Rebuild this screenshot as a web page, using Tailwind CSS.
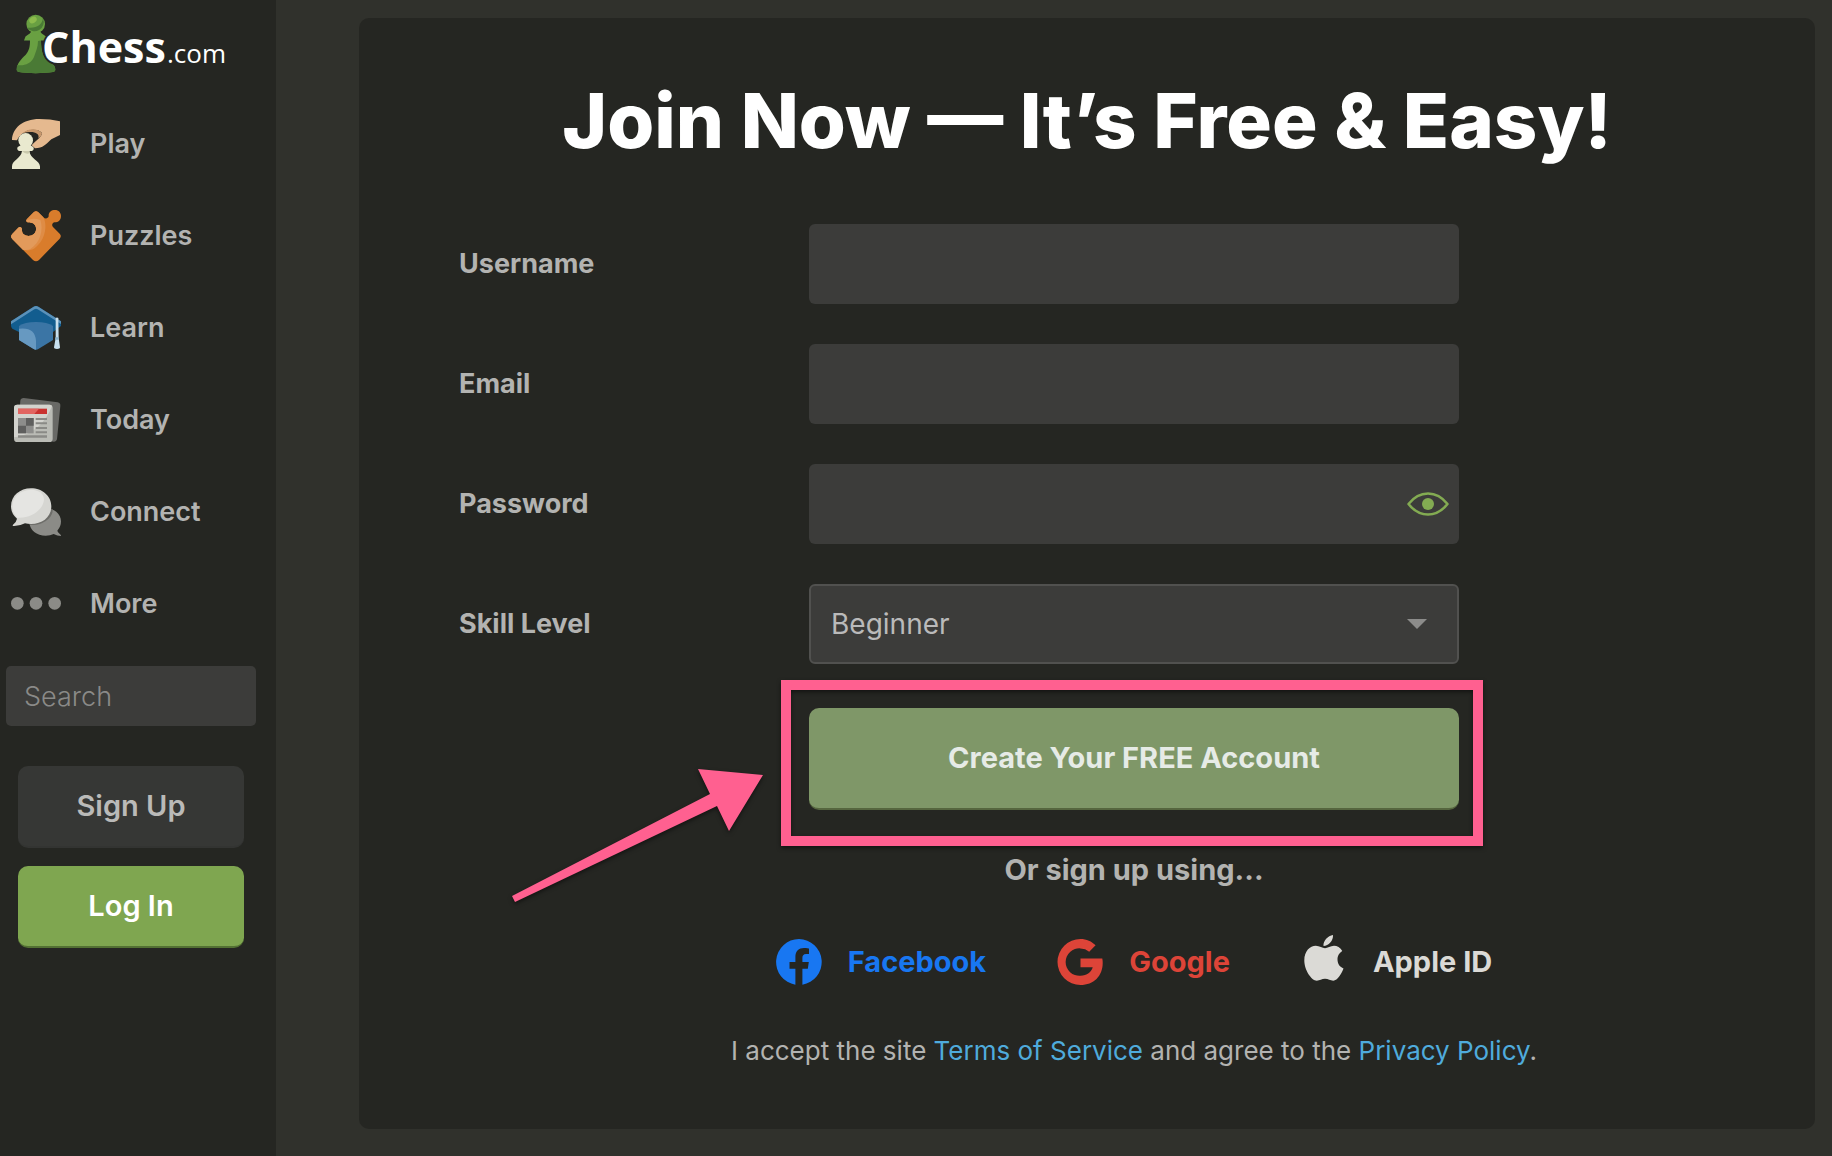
<!DOCTYPE html>
<html lang="en">
<head>
    <meta charset="UTF-8">
    <meta name="viewport" content="width=device-width, initial-scale=1.0">
    <title>Join Now - Chess.com</title>
    <script src="https://cdn.jsdelivr.net/npm/@tailwindcss/browser@4"></script>
</head>
<body class="flex min-h-screen bg-[#30312c] font-['Inter',sans-serif] text-[#b3b3b1]">

    <!-- Sidebar -->
    <aside class="w-[276px] shrink-0 bg-[#252622]">
        <a href="#" class="block h-[98px] pt-3.5 pl-4" aria-label="Chess.com">
            <svg class="h-[60px] w-[220px]" viewBox="0 0 220 60">
                <path fill="#69a042" d="M8 26.500L9.500 22.500Q15 19 15.500 17H24Q24.500 19 30 22.500L31 26.500H25C25 37 27 44 32 47C37 49.500 39.300 52 39.300 56Q39.300 57.500 37 58C27 59.500 12 59.500 3 58Q.7 57.500.7 56C.7 49 6 44.500 9.500 41C13 37 14 33 14 26.500Z"/>
                <path fill="#4a7a35" d="M25 26.500C25 37 27 44 32 47C37 49.500 39.300 52 39.300 56Q39.300 57.500 37 58C27 59.500 12 59.500 3 58Q.7 57.500.7 56L1 51C8 52 15 50 18 43C20 37 22 33 22 27Z"/>
                <circle cx="19.700" cy="10" r="9.300" fill="#69a042"/>
                <path fill="#4a7a35" d="M27 4.300A9.300 9.300 0 0 1 11 13.500C20 15 26 11 27 4.300Z"/>
                <ellipse cx="17" cy="6" rx="4" ry="3" fill="#8cbb4c" transform="rotate(-35 17 6)"/>
                <g fill="#fff" font-family="Open Sans, sans-serif">
                    <text x="26" y="49" font-size="43" font-weight="700" stroke="#252622" stroke-width="4" stroke-linejoin="round" paint-order="stroke">Chess</text>
                    <text x="151" y="49" font-size="26">.com</text>
                </g>
            </svg>
        </a>

        <nav class="text-[27px] font-semibold">
            <a href="#" class="flex h-[92px] items-center gap-[29px] pl-[11px]">
                <svg class="size-[50px]" viewBox="0 0 150 150">
                    <path fill="#e5b98f" d="M3 63C4 28 35 0 85 0Q118 0 147 7V48L121 61C105 75 96 88 72 88L62 79C72 66 92 56 93 42C86 31 55 28 40 40C29 47 22 55 18 64Z"/>
                    <path fill="#252622" d="M48 42C62 35 87 38 84 48C81 56 74 60 70 64C64 60 62 50 48 42Z"/>
                    <path fill="#c8986d" d="M35 43C50 27 80 26 93 42C92 50 88 54 82 58C88 40 62 34 35 43Z"/>
                    <path fill="#e9e9cf" d="M3 150V142C4 122 30 120 33 96H24Q16 92 20 84L31 78H57L67 84Q71 92 63 96H55C58 120 86 124 87 142V150Z"/>
                    <circle cx="44" cy="64" r="22" fill="#e9e9cf"/>
                    <path fill="#c9c9ac" d="M33 96H55L56 102Q46 108 33 97Z"/>
                </svg>
                Play
            </a>
            <a href="#" class="flex h-[92px] items-center gap-[29px] pl-[11px]">
                <svg class="size-[50px] overflow-visible" viewBox="0 3 150 150">
                    <path fill="#d97c2b" d="M4 72L22 53Q27 49 31 53C35 58 31 66 37 72C45 80 60 80 69 72C78 63 77 49 69 42C62 35 54 40 48 36Q43 32 48 27L68 7Q75 0 82 7L97 22C103 28 111 26 113 19C112 6 121 0 132 0C143 0 150 8 150 18C150 30 142 37 131 37C124 38 121 46 126 51L146 71Q153 78 146 86L84 150Q75 158 66 150L4 87Q-3 79 4 72Z"/>
                    <path fill="#df8c45" d="M4 72L22 53Q27 49 31 53C35 58 31 66 37 72C45 80 60 80 69 72C78 63 77 49 69 42C62 35 54 40 48 36Q43 32 48 27L68 7Q75 0 82 7L97 22C112 50 100 98 66 118Q52 124 36 119L4 87Q-3 79 4 72Z"/>
                    <path fill="#e29a5b" d="M4 72L22 53Q27 49 31 53C35 58 31 66 37 72C45 80 60 80 69 72C78 63 77 49 69 42C62 35 54 40 48 36Q46 34 46 31Q66 22 88 30C98 60 88 98 58 117Q48 121 36 119L4 87Q-3 79 4 72Z"/>
                </svg>
                Puzzles
            </a>
            <a href="#" class="flex h-[92px] items-center gap-[29px] pl-[11px]">
                <svg class="size-[50px]" viewBox="0 -9 150 150">
                    <path fill="#125d8f" d="M0 46L68 2Q75-2 82 2L150 46V60L126 78H24L4 68Q0 66 0 58Z"/>
                    <path fill="#5b91b9" d="M0 46L68 2Q75-2 82 2L150 46V54L80 10Q75 7 70 10L0 55Z"/>
                    <path fill="#3b75a5" d="M24 60Q40 48 75 48Q110 48 126 60V102L82 129Q75 133 68 129L24 102Z"/>
                    <path fill="#6799c1" d="M24 68Q72 62 75 104V131Q71 131 68 129L24 102Z"/>
                    <path fill="#c8e0ee" d="M134 36Q138 33 142 36L143 96L147 124Q147 129 138 129Q129 129 129 124L134 96Z"/>
                    <path fill="#8db4cd" d="M133 94H143V101H132Z"/>
                </svg>
                Learn
            </a>
            <a href="#" class="flex h-[92px] items-center gap-[29px] pl-[11px]">
                <svg class="size-[50px]" viewBox="0 -9 150 150">
                    <path fill="#696966" d="M28 8Q29 0 38 0L140 13Q149 15 148 24L138 124Q136 132 128 131L20 118Z"/>
                    <rect x="9" y="20" width="116" height="112" rx="10" fill="#babbb5"/>
                    <path fill="#d3d3ce" d="M19 20H115Q120 20 123 24C105 70 70 110 9 118V30Q9 20 19 20Z"/>
                    <path fill="#c93230" d="M21 32H108V48H21Z"/>
                    <path fill="#e26561" d="M21 32H84L70 48H21Z"/>
                    <path fill="#8d8d8b" d="M21 60H68V106H21Z"/>
                    <path fill="#5f5f5e" d="M45 60H68V83H45ZM21 83H45V106H21Z"/>
                    <path fill="#8a8a86" d="M74 60H108V66H74ZM74 73H108V79H74ZM74 87H108V93H74ZM74 100H108V106H74ZM21 112H108V119H21Z"/>
                </svg>
                Today
            </a>
            <a href="#" class="flex h-[92px] items-center gap-[29px] pl-[11px]">
                <svg class="size-[50px]" viewBox="0 -4 150 150">
                    <path fill="#8b8b87" d="M150 99C150 76 128 60 103 60C76 60 55 76 55 100C55 126 78 142 104 142Q118 142 128 137Q139 143 150 143Q151 140 144 135Q140 131 139 127Q150 115 150 99Z"/>
                    <path fill="#6d6d69" d="M125 63C127 88 95 113 57 110Q54 105 55 97C58 76 78 60 103 60Q115 60 125 63Z"/>
                    <path fill="#d6d6d2" d="M0 54C0 22 27 0 60 0C94 0 121 23 121 54C121 86 94 107 60 107Q50 107 42 105Q25 114 6 113Q3 111 9 106Q16 100 18 91Q0 76 0 54Z"/>
                    <path fill="#e5e5e2" d="M4 54C4 25 28 5 60 4Q98 6 99 34C96 66 58 91 19 88Q4 74 4 54Z"/>
                </svg>
                Connect
            </a>
            <a href="#" class="flex h-[92px] items-center gap-[29px] pl-[11px]">
                <svg class="size-[50px]" viewBox="0 0 150 150" fill="#8b8b87">
                    <circle cx="19" cy="73" r="19"/>
                    <circle cx="75" cy="73" r="19"/>
                    <circle cx="131" cy="73" r="19"/>
                </svg>
                More
            </a>
        </nav>

        <div class="mt-4 mr-5 ml-1.5">
            <input type="search" aria-label="Search" placeholder="Search" class="block h-[60px] w-full rounded-[5px] bg-[#3c3c3a] px-[18px] text-[27px] font-light placeholder:text-[#8a8a88]">
        </div>
        <div class="mt-10 mr-8 ml-[18px] flex flex-col gap-[18px] text-[29px] font-semibold">
            <button type="button" class="h-[82px] rounded-[10px] border-b-2 border-[#333432] bg-[#363735] text-[#babab8]">Sign Up</button>
            <button type="button" class="h-[82px] rounded-[10px] border-b-2 border-[#537133] bg-[#7fa650] text-white">Log In</button>
        </div>
    </aside>

    <!-- Registration card -->
    <main class="flex-1 pt-[18px] pr-[17px] pb-[26px] pl-[83px]">
        <section class="rounded-[10px] bg-[#252622] pt-[60px] pb-[60px]">
            <h1 class="text-center text-[76px] leading-[84px] font-extrabold text-white">Join Now — It’s Free &amp; Easy!</h1>

            <form class="mt-[62px] grid grid-cols-[350px_minmax(0,650px)] items-center gap-y-10 pl-[100px] text-[27px]">
                <label for="username" class="font-bold">Username</label>
                <input type="text" id="username" class="h-20 w-full rounded-[6px] bg-[#3c3c3a] px-[22px]">

                <label for="email" class="font-bold">Email</label>
                <input type="email" id="email" class="h-20 w-full rounded-[6px] bg-[#3c3c3a] px-[22px]">

                <label for="password" class="font-bold">Password</label>
                <div class="relative">
                    <input type="password" id="password" class="block h-20 w-full rounded-[6px] bg-[#3c3c3a] px-[22px]">
                    <button type="button" aria-label="Show password" class="absolute inset-y-0 right-2.5">
                        <svg class="h-6 w-[42px]" viewBox="0 0 42 24" fill="none">
                            <path stroke="#83ab52" stroke-width="2.500" stroke-linejoin="round" d="M1.500 12C7 5 13 1.500 21 1.500S35 5 40.500 12C35 19 29 22.500 21 22.500S7 19 1.500 12Z"/>
                            <circle cx="21" cy="12" r="6" fill="#83ab52"/>
                        </svg>
                    </button>
                </div>

                <label for="skill" class="font-bold">Skill Level</label>
                <div class="relative">
                    <select id="skill" class="block h-20 w-full appearance-none rounded-[6px] border-2 border-[#51514f] bg-[#3c3c3a] px-5 text-[28px] text-[#bababa]">
                        <option>Beginner</option>
                        <option>Intermediate</option>
                        <option>Advanced</option>
                    </select>
                    <svg class="pointer-events-none absolute top-[35px] right-8 h-2.5 w-5" viewBox="0 0 20 10"><path fill="#8c8c8a" d="M0 0H20L10 10Z"/></svg>
                </div>

                <div class="relative col-start-2 mt-1">
                    <button type="submit" class="block h-[102px] w-full rounded-[10px] border-b-2 border-[#56663f] bg-[#7f9768] text-[29px] font-bold text-[#e6ebe6]">Create Your FREE Account</button>
                    <!-- Callout -->
                    <div class="pointer-events-none absolute -top-7 -right-6 -bottom-9 -left-7 border-[10px] border-[#ff6090] drop-shadow-[0_2px_2px_rgba(0,0,0,0.5)]"></div>
                    <svg class="pointer-events-none absolute top-[59px] -left-[299px] h-[138px] w-[256px] drop-shadow-[0_2px_2px_rgba(0,0,0,0.5)]" viewBox="0 0 256 138">
                        <path fill="#ff6090" d="M2 129L200 27L188 2L253 8L219 64L207 39L5 135Z"/>
                    </svg>
                </div>
            </form>

            <div class="flex flex-col items-center pl-[94px]">
                <p class="mt-10 text-[29px] leading-10 font-bold">Or sign up using...</p>
                <div class="mt-[49px] flex h-[46px] items-center gap-[71px] text-[29px] font-bold">
                    <a href="#" class="flex items-center gap-[26px] text-[#1877f2]">
                        <svg class="size-[46px]" viewBox="0 0 46 46"><path fill="#1877f2" d="M23 0A23 23 0 0 0 19.400 45.700V29.700H13.500V23H19.400V17.900C19.400 12.200 22.800 9 28 9C30.500 9 33 9.500 33 9.500V15.100H30.200C27.300 15.100 26.400 16.900 26.400 18.700V23H32.800L31.800 29.700H26.400V45.700A23 23 0 0 0 23 0Z"/></svg>
                        Facebook
                    </a>
                    <a href="#" class="flex items-center gap-[26px] text-[#dd4438]">
                        <svg class="size-[46px]" viewBox="0 0 46 46"><path fill="#dd4438" d="M38.600 6.300L32.200 12.700A13.800 13.800 0 0 0 23.500 9.400A13.700 13.700 0 1 0 23.500 36.700C30 36.700 34.500 33 35.700 28.200H23.500V19.500H45.300Q45.700 21.500 45.700 24C45.700 37 36.800 46 23.500 46A23 23 0 0 1 23.500 0C29.500 0 34.700 2.400 38.600 6.300Z"/></svg>
                        Google
                    </a>
                    <a href="#" class="flex items-center gap-[26px] text-[#dbdad6]">
                        <svg class="size-[46px] overflow-visible" viewBox="0 0 46 46"><path fill="#dbdad6" d="M22.500 7C22 2 27-3.500 32-4C32.500 1.500 27.500 7 22.500 7ZM41.300 12C37.500 14.500 36.500 17.500 36.500 20.500C36.500 25 39 28 42.500 29.500C41 34 36.500 41.700 32.300 41.700C29 41.700 27.500 39.800 24 39.800C20.500 39.800 19 41.700 15.800 41.700C10.500 41.700 3.300 31 3.300 21.500C3.300 12 9 6.800 14.800 6.800C18.500 6.800 21.500 9.200 24 9.200C26.500 9.200 29.500 6.800 33 6.800C36 6.800 39.500 8.500 41.300 12Z"/></svg>
                        Apple ID
                    </a>
                </div>
                <p class="mt-12 text-[26px] leading-9">I accept the site <a href="#" class="text-[#4fabdc]">Terms of Service</a> and agree to the <a href="#" class="text-[#4fabdc]">Privacy Policy</a>.</p>
            </div>
        </section>
    </main>
</body>
</html>
